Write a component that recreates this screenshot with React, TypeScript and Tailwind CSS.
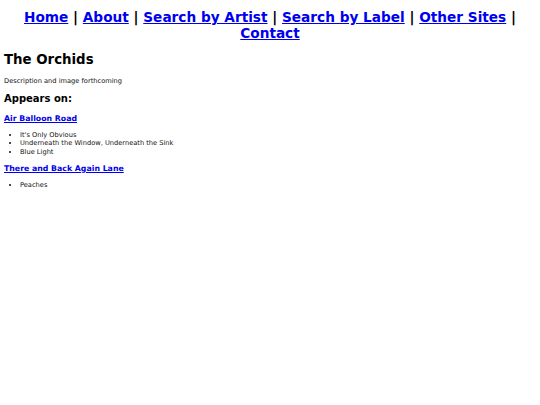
import React from 'react'

interface Album {
    title: string
    tracks: string[]
}

const navLinks = ['Home', 'About', 'Search by Artist', 'Search by Label', 'Other Sites', 'Contact']

const albums: Album[] = [
    {
        title: 'Air Balloon Road',
        tracks: ["It's Only Obvious", 'Underneath the Window, Underneath the Sink', 'Blue Light'],
    },
    {
        title: 'There and Back Again Lane',
        tracks: ['Peaches'],
    },
]

const App: React.FC = () => {
    return (
        <div className="min-h-screen bg-white px-[4px] text-black font-['DejaVu_Sans',Verdana,sans-serif]">
            {/* Top navigation */}
            <nav className="pt-[9px] text-center text-[13.67px] font-bold leading-[16px]">
                {navLinks.map((label, i) => (
                    <React.Fragment key={label}>
                        <a href="#" className="text-[#0000ee] underline">
                            {label}
                        </a>
                        {i < navLinks.length - 1 && ' | '}
                    </React.Fragment>
                ))}
            </nav>

            <h1 className="mt-[11px] text-[13.33px] font-bold leading-[16px]">The Orchids</h1>
            <p className="mt-[9px] text-[6.67px] leading-[8px] text-[#111]">Description and image forthcoming</p>

            <h2 className="mt-[8px] text-[10px] font-bold leading-[12px]">Appears on:</h2>

            {albums.map((album, i) => (
                <div key={album.title}>
                    <h3 className={`${i === 0 ? 'mt-[9px]' : 'mt-[8px]'} text-[7.8px] font-bold leading-[9px]`}>
                        <a href="#" className="text-[#0000ee] underline">
                            {album.title}
                        </a>
                    </h3>
                    <ul className="mt-[8px] list-disc pl-[16px] text-[6.67px] leading-[8.33px] text-[#111]">
                        {album.tracks.map((track) => (
                            <li key={track}>{track}</li>
                        ))}
                    </ul>
                </div>
            ))}
        </div>
    )
}

export default App
